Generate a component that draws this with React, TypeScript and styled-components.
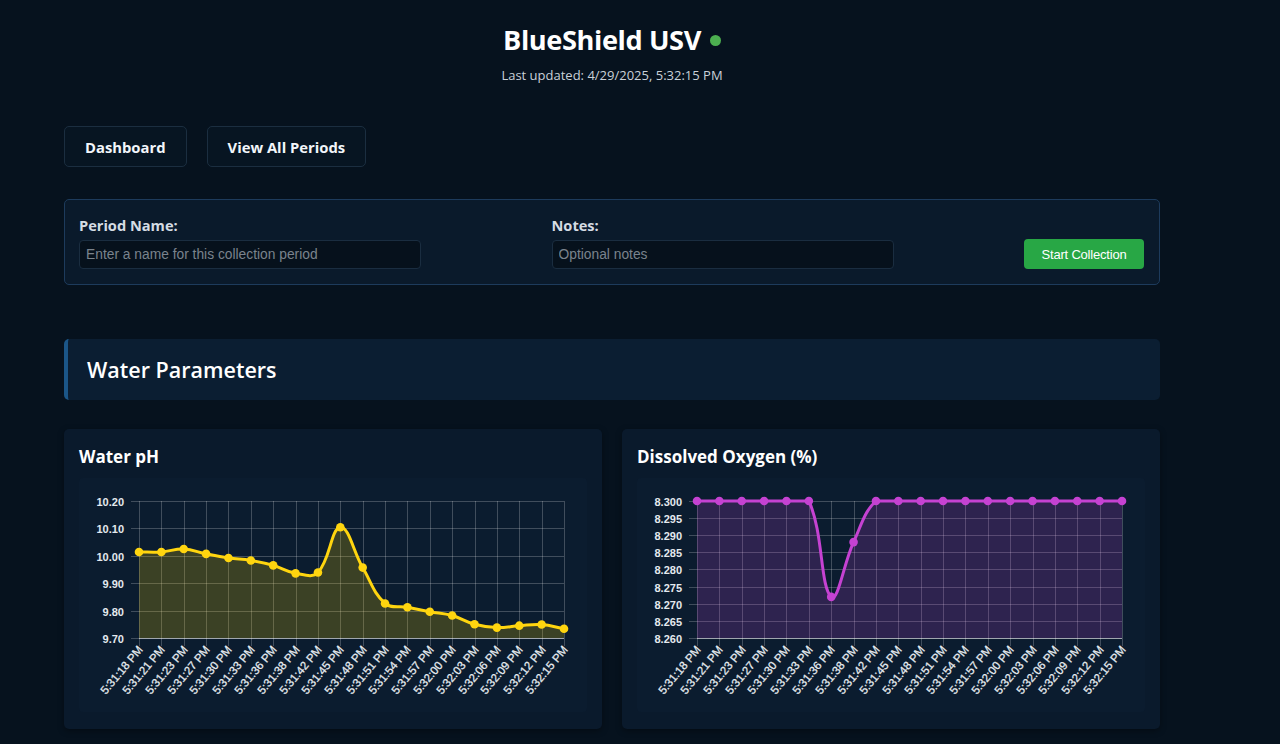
import React from "react";
import styled, { createGlobalStyle } from "styled-components";

const GlobalStyle = createGlobalStyle`
  html, body { margin: 0; padding: 0; }
  body {
    background: #06121e;
    color: #ffffff;
    font-family: "Open Sans", "Noto Sans", sans-serif;
  }
  * { box-sizing: border-box; }
`;

const Page = styled.div`
  width: 1096px;
  margin-left: 64px;
  padding-bottom: 40px;
`;

const Header = styled.header`
  display: flex;
  flex-direction: column;
  align-items: center;
  padding-top: 22px;
`;

const TitleRow = styled.div`
  display: flex;
  align-items: center;
  gap: 9px;
`;

const Title = styled.h1`
  margin: 0;
  font-size: 27.2px;
  line-height: 36px;
  font-weight: 700;
  letter-spacing: -0.4px;
  color: #ffffff;
`;

const StatusDot = styled.span`
  width: 11px;
  height: 11px;
  border-radius: 50%;
  background: #4caf50;
  margin-top: 1px;
`;

const Subtitle = styled.div`
  margin-top: 8px;
  font-size: 13px;
  line-height: 18px;
  color: #c9d1d9;
`;

const Nav = styled.nav`
  display: flex;
  gap: 20px;
  margin-top: 42px;
`;

const NavButton = styled.button`
  height: 41px;
  padding: 0 20px;
  background: #071522;
  border: 1px solid #1b2e40;
  border-radius: 5px;
  color: #f2f6fa;
  font-family: "Open Sans", "Noto Sans", sans-serif;
  font-size: 14.8px;
  font-weight: 700;
  cursor: pointer;
`;

const FormCard = styled.div`
  margin-top: 32px;
  display: flex;
  justify-content: space-between;
  align-items: flex-end;
  padding: 15px 15px 15px 14px;
  background: #0a1a2b;
  border: 1px solid #1d3b5c;
  border-radius: 5px;
`;

const Field = styled.div`
  display: flex;
  flex-direction: column;
  width: 342px;
`;

const Label = styled.label`
  font-size: 14.6px;
  line-height: 20px;
  font-weight: 700;
  color: #d5dce3;
  margin-bottom: 5px;
`;

const Input = styled.input`
  height: 29px;
  width: 100%;
  padding: 0 6px;
  background: #06111c;
  border: 1px solid #1a2d40;
  border-radius: 4px;
  color: #ffffff;
  font-family: "Liberation Sans", Arial, sans-serif;
  font-size: 13.8px;
  outline: none;
  &::placeholder {
    color: #7a838d;
    font-family: "Liberation Sans", Arial, sans-serif;
  }
`;

const StartButton = styled.button`
  width: 120px;
  height: 30px;
  background: #28a745;
  border: none;
  border-radius: 4px;
  color: #ffffff;
  font-family: "Liberation Sans", Arial, sans-serif;
  font-size: 13px;
  letter-spacing: -0.2px;
  cursor: pointer;
`;

const SectionHeader = styled.div`
  margin-top: 54px;
  height: 61px;
  display: flex;
  align-items: center;
  padding-left: 19px;
  background: #0b1e32;
  border-left: 4px solid #1b5688;
  border-radius: 5px;
`;

const SectionTitle = styled.h2`
  margin: 0;
  font-size: 21.5px;
  font-weight: 600;
  color: #ffffff;
`;

const ChartGrid = styled.div`
  margin-top: 29px;
  display: grid;
  grid-template-columns: 1fr 1fr;
  gap: 20px;
`;

const ChartCard = styled.div`
  padding: 17px 15px 17px;
  background: #0a1a2c;
  border-radius: 5px;
  box-shadow: 0 2px 6px rgba(0, 0, 0, 0.35);
`;

const ChartTitle = styled.h3`
  margin: 0 0 10px;
  font-size: 17px;
  line-height: 22px;
  font-weight: 700;
  color: #ffffff;
`;

const ChartBox = styled.div`
  height: 234px;
  background: #0b1c2f;
  border-radius: 4px;
`;

const times = [
  "5:31:18 PM", "5:31:21 PM", "5:31:23 PM", "5:31:27 PM", "5:31:30 PM",
  "5:31:33 PM", "5:31:36 PM", "5:31:38 PM", "5:31:42 PM", "5:31:45 PM",
  "5:31:48 PM", "5:31:51 PM", "5:31:54 PM", "5:31:57 PM", "5:32:00 PM",
  "5:32:03 PM", "5:32:06 PM", "5:32:09 PM", "5:32:12 PM", "5:32:15 PM",
];

const phData = [
  10.014, 10.014, 10.025, 10.007, 9.992, 9.983, 9.965, 9.936, 9.939, 10.104,
  9.957, 9.826, 9.812, 9.796, 9.782, 9.75, 9.738, 9.745, 9.749, 9.734,
];

const doData = [
  8.3, 8.3, 8.3, 8.3, 8.3, 8.3, 8.272, 8.288, 8.3, 8.3,
  8.3, 8.3, 8.3, 8.3, 8.3, 8.3, 8.3, 8.3, 8.3, 8.3,
];

type Pt = { x: number; y: number };

const W = 508;
const H = 234;
const L = 60;
const R = 485;
const T = 23;
const B = 160;

function splinePath(pts: Pt[], tension: number): string {
  const n = pts.length;
  const cps = pts.map((p, i) => {
    const prev = pts[i - 1] || p;
    const next = pts[i + 1] || p;
    const d01 = Math.hypot(p.x - prev.x, p.y - prev.y);
    const d12 = Math.hypot(next.x - p.x, next.y - p.y);
    let s01 = d01 / (d01 + d12);
    let s12 = d12 / (d01 + d12);
    if (isNaN(s01)) s01 = 0;
    if (isNaN(s12)) s12 = 0;
    const fa = tension * s01;
    const fb = tension * s12;
    const clampY = (v: number) => Math.max(T, Math.min(B, v));
    return {
      prev: { x: p.x - fa * (next.x - prev.x), y: clampY(p.y - fa * (next.y - prev.y)) },
      next: { x: p.x + fb * (next.x - prev.x), y: clampY(p.y + fb * (next.y - prev.y)) },
    };
  });
  let d = `M${pts[0].x},${pts[0].y}`;
  for (let i = 1; i < n; i++) {
    const c1 = cps[i - 1].next;
    const c2 = cps[i].prev;
    d += ` C${c1.x},${c1.y} ${c2.x},${c2.y} ${pts[i].x},${pts[i].y}`;
  }
  return d;
}

type ChartProps = {
  data: number[];
  min: number;
  max: number;
  step: number;
  decimals: number;
  color: string;
  fill: string;
};

const LineChart: React.FC<ChartProps> = ({ data, min, max, step, decimals, color, fill }) => {
  const n = data.length;
  const xAt = (i: number) => L + ((R - L) * i) / (n - 1);
  const yAt = (v: number) => T + ((max - v) / (max - min)) * (B - T);
  const pts = data.map((v, i) => ({ x: xAt(i), y: yAt(v) }));
  const line = splinePath(pts, 0.4);
  const area = `${line} L${pts[n - 1].x},${B} L${pts[0].x},${B} Z`;
  const tickCount = Math.round((max - min) / step);
  const yTicks = Array.from({ length: tickCount + 1 }, (_, i) => max - i * step);
  const grid = "rgba(255,255,255,0.22)";
  const crisp = (v: number) => Math.round(v) + 0.5;

  return (
    <svg width={W} height={H} viewBox={`0 0 ${W} ${H}`}>
      {yTicks.map((v, i) => {
        const y = crisp(yAt(v));
        return (
          <g key={`y${i}`}>
            <line x1={L - 8} x2={R} y1={y} y2={y} stroke={grid} strokeWidth={1} />
            <text
              x={L - 15}
              y={y + 4}
              textAnchor="end"
              fill="#e4e9ee"
              fontFamily="Liberation Sans, Arial, sans-serif"
              fontWeight={700}
              fontSize={11}
            >
              {v.toFixed(decimals)}
            </text>
          </g>
        );
      })}
      {times.map((t, i) => {
        const x = crisp(xAt(i));
        return (
          <g key={`x${i}`}>
            <line x1={x} x2={x} y1={T} y2={B + 8} stroke={grid} strokeWidth={1} />
            <text
              transform={`translate(${x + 4},${B + 12}) rotate(-50)`}
              textAnchor="end"
              fill="#e8edf2"
              fontFamily="Liberation Sans, Arial, sans-serif"
              fontWeight={400}
              fontSize={11.5}
              stroke="#e8edf2"
              strokeWidth={0.25}
            >
              {t}
            </text>
          </g>
        );
      })}
      <path d={area} fill={fill} />
      <line x1={L} x2={R} y1={crisp(B)} y2={crisp(B)} stroke="rgba(255,255,255,0.5)" strokeWidth={1} />
      <path d={line} fill="none" stroke={color} strokeWidth={3} strokeLinejoin="round" />
      {pts.map((p, i) => (
        <circle key={`p${i}`} cx={p.x} cy={p.y} r={4.3} fill={color} />
      ))}
    </svg>
  );
};

export default function App() {
  return (
    <>
      <GlobalStyle />
      <Page>
        <Header>
          <TitleRow>
            <Title>BlueShield USV</Title>
            <StatusDot />
          </TitleRow>
          <Subtitle>Last updated: 4/29/2025, 5:32:15 PM</Subtitle>
        </Header>

        <Nav>
          <NavButton>Dashboard</NavButton>
          <NavButton>View All Periods</NavButton>
        </Nav>

        <FormCard>
          <Field>
            <Label>Period Name:</Label>
            <Input placeholder="Enter a name for this collection period" />
          </Field>
          <Field>
            <Label>Notes:</Label>
            <Input placeholder="Optional notes" />
          </Field>
          <StartButton>Start Collection</StartButton>
        </FormCard>

        <SectionHeader>
          <SectionTitle>Water Parameters</SectionTitle>
        </SectionHeader>

        <ChartGrid>
          <ChartCard>
            <ChartTitle>Water pH</ChartTitle>
            <ChartBox>
              <LineChart
                data={phData}
                min={9.7}
                max={10.2}
                step={0.1}
                decimals={2}
                color="#ffd50f"
                fill="rgba(255, 215, 0, 0.2)"
              />
            </ChartBox>
          </ChartCard>
          <ChartCard>
            <ChartTitle>Dissolved Oxygen (%)</ChartTitle>
            <ChartBox>
              <LineChart
                data={doData}
                min={8.26}
                max={8.3}
                step={0.005}
                decimals={3}
                color="#c542d2"
                fill="rgba(192, 64, 208, 0.2)"
              />
            </ChartBox>
          </ChartCard>
        </ChartGrid>
      </Page>
    </>
  );
}
